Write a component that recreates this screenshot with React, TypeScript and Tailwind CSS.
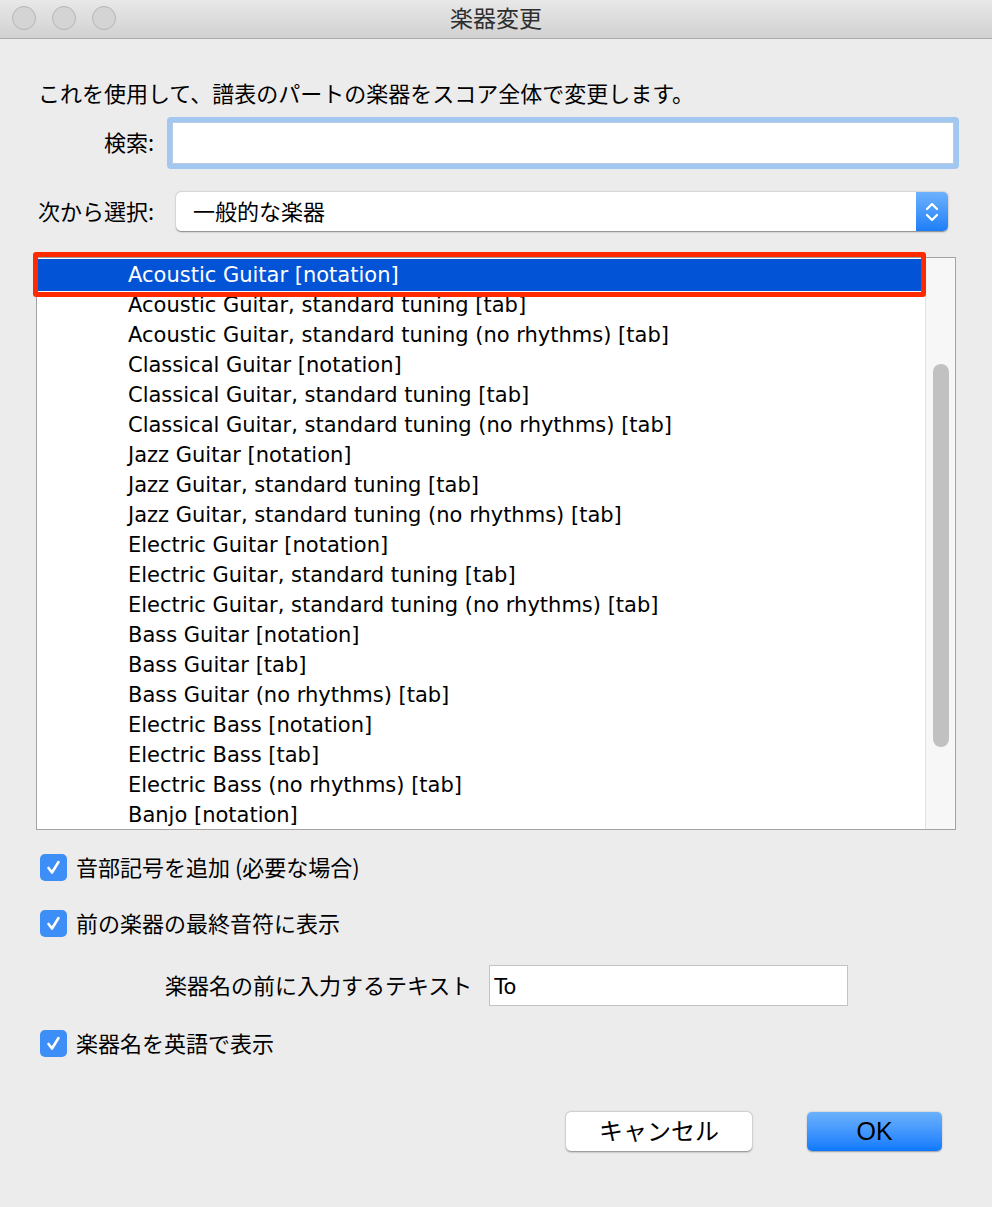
import { useState } from 'react'

const JP = "font-['Noto_Sans_CJK_JP',sans-serif]"
const LATIN = "font-['DejaVu_Sans',sans-serif]"

const INSTRUMENTS = [
  'Acoustic Guitar [notation]',
  'Acoustic Guitar, standard tuning [tab]',
  'Acoustic Guitar, standard tuning (no rhythms) [tab]',
  'Classical Guitar [notation]',
  'Classical Guitar, standard tuning [tab]',
  'Classical Guitar, standard tuning (no rhythms) [tab]',
  'Jazz Guitar [notation]',
  'Jazz Guitar, standard tuning [tab]',
  'Jazz Guitar, standard tuning (no rhythms) [tab]',
  'Electric Guitar [notation]',
  'Electric Guitar, standard tuning [tab]',
  'Electric Guitar, standard tuning (no rhythms) [tab]',
  'Bass Guitar [notation]',
  'Bass Guitar [tab]',
  'Bass Guitar (no rhythms) [tab]',
  'Electric Bass [notation]',
  'Electric Bass [tab]',
  'Electric Bass (no rhythms) [tab]',
  'Banjo [notation]',
]

export default function App() {
  const [selected, setSelected] = useState(0)
  const [search, setSearch] = useState('')
  const [prefix, setPrefix] = useState('To')
  const [opts, setOpts] = useState({ clef: true, lastNote: true, english: true })

  return (
    <div className={`w-[992px] h-[1207px] bg-[#ececec] flex flex-col ${JP}`}>
      {/* Title bar */}
      <header className="h-[39px] shrink-0 grid grid-cols-[1fr_auto_1fr] items-center bg-gradient-to-b from-[#e9e8e9] to-[#d2d1d2] border-b border-[#acacac]">
        <div className="flex items-center gap-4 pl-3 -mt-[3px]">
          <span className="w-6 h-6 rounded-full bg-[#d4d4d4] border border-[#b6b6b6]" />
          <span className="w-6 h-6 rounded-full bg-[#d4d4d4] border border-[#b6b6b6]" />
          <span className="w-6 h-6 rounded-full bg-[#d4d4d4] border border-[#b6b6b6]" />
        </div>
        <h1 className="text-[23px] leading-none text-[#2e2e2e] -mt-[4px]">楽器変更</h1>
        <div />
      </header>

      <div className="flex flex-col pl-[38px] pt-[41px]">
        <p className="text-[22px] leading-[24px] text-black">
          これを使用して、譜表のパートの楽器をスコア全体で変更します。
        </p>

        {/* Search */}
        <div className="flex items-center mt-[13px] h-[52px]">
          <label className="w-[116px] pb-[4px] text-right text-[22px] leading-none text-black">検索:</label>
          <div className="ml-[13px] w-[792px] h-[52px] rounded-[4px] border-[5px] border-[#a2c7f1]">
            <input
              value={search}
              onChange={(e) => setSearch(e.target.value)}
              className="w-full h-full bg-white border border-[#b9cbe0] outline-none px-2 text-[19px]"
            />
          </div>
        </div>

        {/* Category select */}
        <div className="flex items-center mt-[23px] h-[39px]">
          <label className="w-[116px] pb-[4px] text-right text-[22px] leading-none text-black whitespace-nowrap">次から選択:</label>
          <div className="ml-[22px] w-[772px] h-[39px] flex rounded-[5px] bg-white shadow-[0_0.5px_1.5px_rgba(0,0,0,0.45)]">
            <span className="flex-1 pl-[17px] pb-[4px] flex items-center text-[22px] leading-none text-black">一般的な楽器</span>
            <span className="w-[32px] h-full rounded-r-[5px] bg-gradient-to-b from-[#6cb1fc] to-[#1a7ef7] flex items-center justify-center">
              <svg width="14" height="24" viewBox="0 0 14 24" fill="none" stroke="white" strokeWidth={2.2} strokeLinecap="round" strokeLinejoin="round">
                <path d="M2 9l5-5 5 5" />
                <path d="M2 15l5 5 5-5" />
              </svg>
            </span>
          </div>
        </div>

        {/* Instrument list */}
        <div className="relative mt-[26px] -ml-[2px] w-[920px] h-[573px] bg-white border border-[#a3a3a3] flex">
          <div className="flex-1 overflow-hidden pt-[1px]">
            {INSTRUMENTS.map((name, i) => (
              <div
                key={name}
                onClick={() => setSelected(i)}
                className={`${i === 0 ? 'h-[32px] pt-[1px]' : 'h-[30px] pb-[1px]'} flex items-center pl-[91px] text-[21px] leading-none whitespace-nowrap ${LATIN} ${
                  selected === i ? 'bg-[#0353d6] text-white' : 'text-black'
                }`}
              >
                {name}
              </div>
            ))}
          </div>
          <div className="w-[30px] h-full bg-[#f7f7f7] border-l border-[#e2e2e2] flex justify-center pt-[106px]">
            <div className="w-[16px] h-[383px] rounded-full bg-[#c1c1c1]" />
          </div>
          <div className="absolute -left-[4px] -top-[6px] w-[893px] h-[45px] rounded-[3px] border-[5px] border-[#ff2a00]" />
        </div>

        {/* Options */}
        <Check
          className="mt-[22px]"
          checked={opts.clef}
          onChange={() => setOpts({ ...opts, clef: !opts.clef })}
          label="音部記号を追加 (必要な場合)"
        />
        <Check
          className="mt-[26px]"
          checked={opts.lastNote}
          onChange={() => setOpts({ ...opts, lastNote: !opts.lastNote })}
          label="前の楽器の最終音符に表示"
        />

        <div className="flex items-center mt-[27px] h-[41px] pl-[127px]">
          <span className="pb-[4px] text-[22px] leading-none text-black">楽器名の前に入力するテキスト</span>
          <input
            value={prefix}
            onChange={(e) => setPrefix(e.target.value)}
            className={`ml-[17px] w-[359px] h-[41px] bg-white border border-[#c3c3c3] outline-none pl-[4px] pt-[3px] text-[21px] text-black ${LATIN}`}
          />
        </div>

        <Check
          className="mt-[22px]"
          checked={opts.english}
          onChange={() => setOpts({ ...opts, english: !opts.english })}
          label="楽器名を英語で表示"
        />

        {/* Actions */}
        <div className="flex items-center mt-[54px] pl-[528px] gap-[55px]">
          <button className="w-[186px] h-[39px] pb-[3px] rounded-[5px] bg-white shadow-[0_0.5px_2px_rgba(0,0,0,0.45)] text-[24px] leading-none text-black">
            キャンセル
          </button>
          <button className="w-[135px] h-[39px] rounded-[5px] bg-gradient-to-b from-[#6ab1fb] to-[#0a79fe] shadow-[0_0.5px_1.5px_rgba(0,0,0,0.35)] text-[25px] leading-none text-black font-['Liberation_Sans',sans-serif]">
            OK
          </button>
        </div>
      </div>
    </div>
  )
}

function Check({ checked, onChange, label, className = '' }: { checked: boolean; onChange: () => void; label: string; className?: string }) {
  return (
    <label className={`flex items-center h-[30px] cursor-pointer ${className}`} onClick={onChange}>
      <span className={`w-[27px] h-[27px] ml-[2px] rounded-[5px] flex items-center justify-center ${checked ? 'bg-[#3d8ef6]' : 'bg-white border border-[#b0b0b0]'}`}>
        {checked && (
          <svg width="17" height="17" viewBox="0 0 17 17" fill="none" stroke="white" strokeWidth={2.6} strokeLinecap="round" strokeLinejoin="round">
            <path d="M3.5 9l3.5 4.5L13.5 3" />
          </svg>
        )}
      </span>
      <span className="ml-[9px] pb-[3px] text-[22px] leading-none text-black">{label}</span>
    </label>
  )
}
